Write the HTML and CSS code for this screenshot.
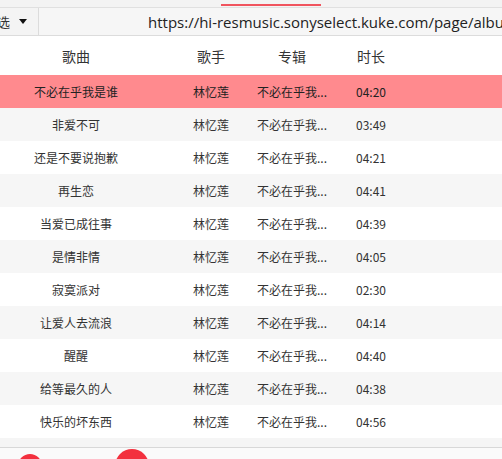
FILE: index.html
```html
<!DOCTYPE html>
<html lang="zh">
<head>
<meta charset="utf-8">
<link rel="stylesheet" href="styles.css">
</head>
<body>
<div class="topstrip"><div class="tabline"></div></div>
<div class="toolbar">
  <div class="select"><span class="sel-text">选</span><span class="caret"></span></div>
  <div class="url">https://hi-resmusic.sonyselect.kuke.com/page/album</div>
</div>
<div class="table">
  <div class="row head">
    <div class="c1">歌曲</div><div class="c2">歌手</div><div class="c3">专辑</div><div class="c4">时长</div>
  </div>
  <div class="row active"><div class="c1">不必在乎我是谁</div><div class="c2">林忆莲</div><div class="c3">不必在乎我...</div><div class="c4">04:20</div></div>
  <div class="row"><div class="c1">非爱不可</div><div class="c2">林忆莲</div><div class="c3">不必在乎我...</div><div class="c4">03:49</div></div>
  <div class="row"><div class="c1">还是不要说抱歉</div><div class="c2">林忆莲</div><div class="c3">不必在乎我...</div><div class="c4">04:21</div></div>
  <div class="row"><div class="c1">再生恋</div><div class="c2">林忆莲</div><div class="c3">不必在乎我...</div><div class="c4">04:41</div></div>
  <div class="row"><div class="c1">当爱已成往事</div><div class="c2">林忆莲</div><div class="c3">不必在乎我...</div><div class="c4">04:39</div></div>
  <div class="row"><div class="c1">是情非情</div><div class="c2">林忆莲</div><div class="c3">不必在乎我...</div><div class="c4">04:05</div></div>
  <div class="row"><div class="c1">寂寞派对</div><div class="c2">林忆莲</div><div class="c3">不必在乎我...</div><div class="c4">02:30</div></div>
  <div class="row"><div class="c1">让爱人去流浪</div><div class="c2">林忆莲</div><div class="c3">不必在乎我...</div><div class="c4">04:14</div></div>
  <div class="row"><div class="c1">醒醒</div><div class="c2">林忆莲</div><div class="c3">不必在乎我...</div><div class="c4">04:40</div></div>
  <div class="row"><div class="c1">给等最久的人</div><div class="c2">林忆莲</div><div class="c3">不必在乎我...</div><div class="c4">04:38</div></div>
  <div class="row"><div class="c1">快乐的坏东西</div><div class="c2">林忆莲</div><div class="c3">不必在乎我...</div><div class="c4">04:56</div></div>
</div>
<div class="gap"></div>
<div class="bottom">
  <span class="dot dot1"></span>
  <span class="dot dot2"></span>
</div>
</body>
</html>
```

FILE: styles.css
```css
html, body {
  margin: 0;
  padding: 0;
}
body {
  width: 502px;
  height: 459px;
  overflow: hidden;
  background: #ffffff;
  font-family: "Noto Sans CJK SC", "Noto Sans", sans-serif;
  color: #333333;
}
.topstrip {
  height: 7px;
  background: #f3f3f3;
  position: relative;
  border-bottom: 1px solid #e0e0e0;
}
.tabline {
  position: absolute;
  left: 221px;
  top: 4px;
  width: 100px;
  height: 2px;
  background: #f0545e;
}
.toolbar {
  height: 27px;
  display: flex;
  background: #f4f4f4;
  border-bottom: 1px solid #dcdcdc;
}
.select {
  border-right: 1px solid #dcdcdc;
  display: flex;
  align-items: center;
  overflow: hidden;
  box-sizing: border-box;
  width: 39px;
}
.sel-text {
  font-size: 13px;
  margin-left: -3px;
  color: #333;
}
.caret {
  margin-left: 9px;
  width: 0;
  height: 0;
  border-left: 4px solid transparent;
  border-right: 4px solid transparent;
  border-top: 5px solid #111;
}
.url {
  flex: 1;
  display: flex;
  align-items: center;
  padding-left: 109px;
  white-space: nowrap;
  overflow: hidden;
  font-family: "Open Sans", "Noto Sans", sans-serif;
  font-size: 15px;
  color: #222;
  background: #f6f6f6;
}
.table {
  display: flex;
  flex-direction: column;
}
.row {
  display: grid;
  grid-template-columns: 165px 92px 70px 88px;
  height: 33px;
  align-items: center;
  font-size: 12px;
  background: #ffffff;
}
.row:nth-child(odd) {
  background: #f6f6f6;
}
.row.head {
  height: 39px;
  font-size: 14px;
  background: #ffffff;
  color: #333;
}
.row.active {
  background: #ff8a8e;
  color: #222;
}
.row > div {
  text-align: center;
  white-space: nowrap;
}
.row > .c1 {
  padding-right: 13px;
}
.gap {
  height: 9px;
  background: #f5f5f5;
  border-bottom: 1px solid #d8d8d8;
}
.bottom {
  height: 12px;
  position: relative;
  overflow: hidden;
  background: #fafafa;
}
.dot {
  position: absolute;
  border-radius: 50%;
  background: #f3303e;
}
.dot1 {
  left: 18px;
  top: 6px;
  width: 24px;
  height: 24px;
}
.dot2 {
  left: 115px;
  top: 1px;
  width: 34px;
  height: 34px;
}
```
